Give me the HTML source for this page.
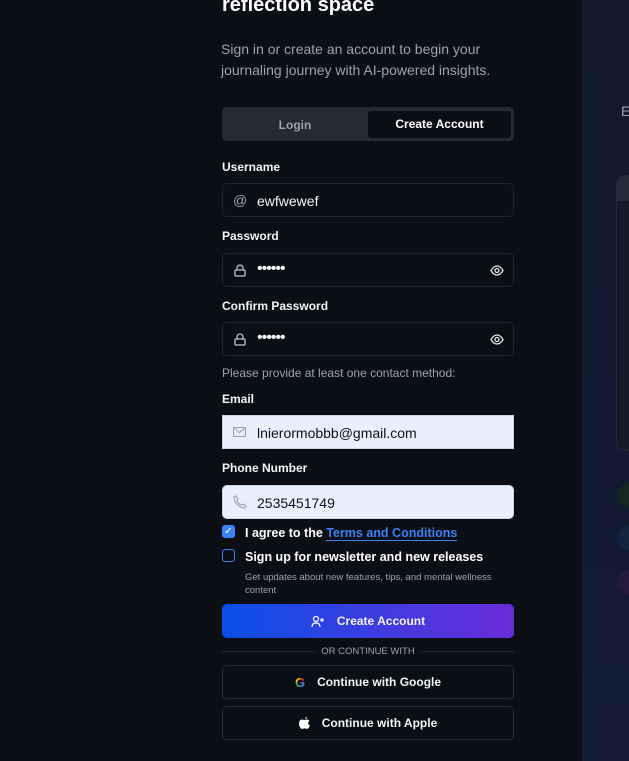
<!DOCTYPE html>
<html><head><meta charset="utf-8"><style>
*{box-sizing:border-box;margin:0;padding:0}
body{width:629px;height:761px;overflow:hidden;background:#0b0e14;font-family:"Liberation Sans",sans-serif;color:#fff;position:relative}
.right{position:absolute;left:582px;top:0;width:47px;height:761px;background:linear-gradient(180deg,#121a2c,#111a30 60%,#131c33)}
.abs{position:absolute}
.lbl{position:absolute;left:222px;font-size:12px;font-weight:bold;color:#f3f4f6}
.inp{position:absolute;left:222px;width:292px;height:34px;border:1px solid #1f2533;border-radius:5px;background:#0b0e14;font-size:14px;color:#f3f4f6}
.inp .t{position:absolute;left:34px;top:9px}
.inp svg{position:absolute}
.light{background:#e8f0fe;color:#111;border-color:#c9d4e6}
.btn{position:absolute;left:222px;width:292px;height:34px;border:1px solid #262c38;border-radius:5px;font-size:12px;font-weight:bold;color:#f3f4f6;display:flex;align-items:center;justify-content:center;gap:12px}
</style></head><body>
<div class="right">
<div class="abs" style="left:39px;top:103px;font-size:14px;color:#9aa3b5">E</div>
<div class="abs" style="left:34px;top:175px;width:30px;height:276px;border:1px solid #222a3a;border-radius:8px;background:#141a29"></div>
<div class="abs" style="left:35px;top:176px;width:30px;height:25px;background:#242a37;border-radius:8px 0 0 0"></div>
<div class="abs" style="left:36px;top:482px;width:26px;height:26px;border-radius:50%;background:#13261f"></div>
<div class="abs" style="left:36px;top:525px;width:26px;height:26px;border-radius:50%;background:#13223f"></div>
<div class="abs" style="left:36px;top:569px;width:26px;height:26px;border-radius:50%;background:#231a3c"></div>
</div>
<div class="abs" style="left:222px;top:-6px;font-size:20px;font-weight:bold">reflection space</div>
<div class="abs" style="left:221px;top:39px;font-size:14px;line-height:21px;color:#9ca3af">Sign in or create an account to begin your<br>journaling journey with AI-powered insights.</div>
<div class="abs" style="left:222px;top:107px;width:292px;height:34px;background:#252a33;border-radius:5px"></div>
<div class="abs" style="left:222px;top:118px;width:146px;text-align:center;font-size:12px;font-weight:bold;color:#9ca3af">Login</div>
<div class="abs" style="left:368px;top:111px;width:143px;height:27px;background:#0b0e14;border-radius:3px;text-align:center;font-size:12px;font-weight:bold;line-height:27px">Create Account</div>

<div class="lbl" style="top:160px">Username</div>
<div class="inp" style="top:183px"><span class="abs" style="left:10px;top:8px;color:#9ca3af;font-size:14px">@</span><span class="t">ewfwewef</span></div>
<div class="lbl" style="top:229px">Password</div>
<div class="inp" style="top:253px"><svg style="left:11px;top:10px" width="12" height="13" viewBox="0 0 12 13" fill="none" stroke="#c0c4cc" stroke-width="1.3"><rect x="1" y="6" width="10" height="6" rx="1"/><path d="M3 6V4a3 3 0 0 1 6 0v2"/></svg><span class="t" style="top:6px;font-size:16px;letter-spacing:-1px">••••••</span><svg style="left:267px;top:11px" width="14" height="11" viewBox="0 0 14 11" fill="none" stroke="#e5e7eb" stroke-width="1.3"><path d="M1 5.5C3 2 5 1 7 1s4 1 6 4.5C11 9 9 10 7 10S3 9 1 5.5z"/><circle cx="7" cy="5.5" r="2"/></svg></div>
<div class="lbl" style="top:299px">Confirm Password</div>
<div class="inp" style="top:322px"><svg style="left:11px;top:10px" width="12" height="13" viewBox="0 0 12 13" fill="none" stroke="#c0c4cc" stroke-width="1.3"><rect x="1" y="6" width="10" height="6" rx="1"/><path d="M3 6V4a3 3 0 0 1 6 0v2"/></svg><span class="t" style="top:6px;font-size:16px;letter-spacing:-1px">••••••</span><svg style="left:267px;top:11px" width="14" height="11" viewBox="0 0 14 11" fill="none" stroke="#e5e7eb" stroke-width="1.3"><path d="M1 5.5C3 2 5 1 7 1s4 1 6 4.5C11 9 9 10 7 10S3 9 1 5.5z"/><circle cx="7" cy="5.5" r="2"/></svg></div>
<div class="abs" style="left:222px;top:366px;font-size:12px;color:#9ca3af">Please provide at least one contact method:</div>
<div class="lbl" style="top:392px">Email</div>
<div class="inp light" style="top:415px;border-radius:0"><svg style="left:10px;top:11px" width="13" height="10" viewBox="0 0 13 10" fill="none" stroke="#9ca3af" stroke-width="1.1"><rect x=".5" y=".5" width="12" height="9"/><path d="M.5 .5l6 5 6-5"/></svg><span class="t">lnierormobbb@gmail.com</span></div>
<div class="lbl" style="top:461px">Phone Number</div>
<div class="inp light" style="top:485px"><svg style="left:10px;top:9px" width="14" height="14" viewBox="0 0 14 14" fill="none" stroke="#9ca3af" stroke-width="1.1"><path d="M3 1l2 3-1.2 1.5a8 8 0 0 0 4.7 4.7L10 9l3 2-1 2C6 13 1 8 1 2z"/></svg><span class="t">2535451749</span></div>
<div class="abs" style="left:222px;top:525px;width:13px;height:13px;border-radius:3px;background:#3b82f6;color:#fff;font-size:10px;text-align:center;line-height:13px">✓</div>
<div class="abs" style="left:245px;top:526px;font-size:12.5px;font-weight:bold">I agree to the <span style="color:#3b82f6;border-bottom:1px solid #3b82f6">Terms and Conditions</span></div>
<div class="abs" style="left:222px;top:549px;width:13px;height:13px;border-radius:3px;border:1.3px solid #3b82f6"></div>
<div class="abs" style="left:245px;top:550px;font-size:12.5px;font-weight:bold">Sign up for newsletter and new releases</div>
<div class="abs" style="left:245px;top:571px;font-size:9.5px;line-height:13px;color:#9ca3af">Get updates about new features, tips, and mental wellness<br>content</div>
<div class="btn" style="top:604px;border:none;background:linear-gradient(90deg,#0a4fe6,#6b2bd9);height:34px"><svg width="14" height="13" viewBox="0 0 14 13" fill="none" stroke="#fff" stroke-width="1.2"><circle cx="5" cy="4" r="2.5"/><path d="M1 12c0-3 2-4 4-4s4 1 4 4M11 3v4M9 5h4"/></svg>Create Account</div>
<div class="abs" style="left:222px;top:651px;width:93px;height:1px;background:#252a35"></div>
<div class="abs" style="left:421px;top:651px;width:93px;height:1px;background:#252a35"></div>
<div class="abs" style="left:315px;top:646px;width:106px;text-align:center;font-size:9.5px;color:#9ca3af">OR CONTINUE WITH</div>
<div class="btn" style="top:665px"><span style="font-size:13px;font-weight:bold;background:conic-gradient(#ea4335 0 25%,#4285f4 25% 50%,#34a853 50% 75%,#fbbc05 75%);-webkit-background-clip:text;color:transparent">G</span>Continue with Google</div>
<div class="btn" style="top:706px"><svg width="11" height="13" viewBox="0 0 11 13" fill="#fff"><path d="M8 0c0 1-1 2-2 2 0-1 1-2 2-2zM5.5 3c1 0 1.5-.5 2.5-.5s2 .6 2.5 1.4c-2 1-1.6 4 .4 4.6-.6 1.8-1.6 3.4-2.6 3.4S7 11.4 5.5 11.4 4 12 3 12 0 9.5 0 6.5 2 2.5 3 2.5s1.5.5 2.5.5z"/></svg>Continue with Apple</div>
</body></html>
